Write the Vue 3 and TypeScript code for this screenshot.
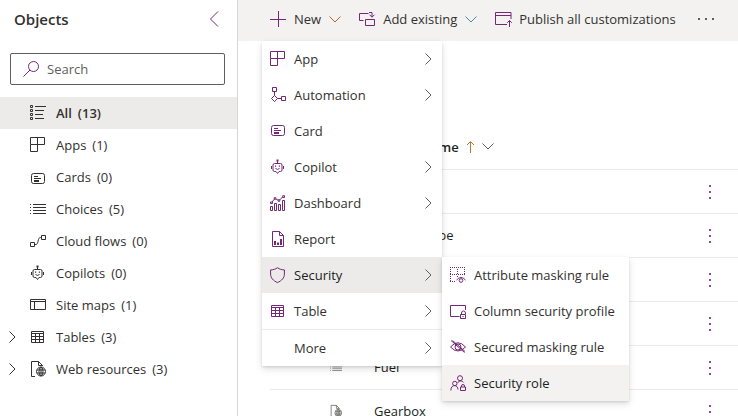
<script setup lang="ts">
import { ref } from 'vue'

interface Icon {
  line: string
  solid?: string
}
interface NavItem {
  label: string
  count: number
  icon: string
  expandable?: boolean
}
interface MenuItem {
  label: string
  icon?: string
  submenu?: boolean
}

const card = (y: number): Icon => ({
  line: `M3.5 ${y}.5h9a2 2 0 0 1 2 2v6a2 2 0 0 1-2 2h-9a2 2 0 0 1-2-2v-6a2 2 0 0 1 2-2zM4 ${y + 3}.5h4M4 ${y + 5}.5h7`,
  solid: `M4 ${y + 7}h5v2H4z`,
})

const icons: Record<string, Icon> = {
  all: {
    line: 'M.5.5h2v2h-2zM.5 4.5h2v2h-2zM.5 8.5h2v2h-2zM.5 12.5h2v2h-2zM5 1.5h11M5 5.5h9M5 9.5h8M5 13.5h9',
  },
  apps: { line: 'M.5.5h14v7H.5zM.5 7.5v7h7V.5' },
  card: card(2),
  cards: card(4),
  choices: {
    line: 'M3 3.5h13M3 6.5h13M3 9.5h13M3 12.5h13M0 3.5h1M0 6.5h1M0 9.5h1M0 12.5h1',
  },
  flows: {
    line: 'M.5 9.5h4v4h-4zM11.5 2.5h4v4h-4zM4.5 11.5H6c1 0 1.5-1 2-3l.5-2c.4-1.500 1-2 2-2h1',
  },
  copilot: {
    line: 'M4.500 4.500h6q1.500 0 1.500 1.500v5q0 1.500-1.500 1.500H9L7.500 14.500 6 12.500H4.500Q3 12.500 3 11V6q0-1.500 1.500-1.500zM7.500 4.500V2M1.500 7v3M13.500 7v3M5.500 9.500q2 1.800 4 0',
    solid: 'M6.500.5h2v2h-2zM5 6.500h1.200v1.200H5zM8.800 6.500H10v1.200H8.800z',
  },
  sitemap: { line: 'M.5 2.500h15v10H.5zM.5 4.500h15M4.500 4.500v8' },
  table: {
    line: 'M1.500 2.500h12v11h-12zM1.500 4.500h12M1.500 7.500h12M1.500 10.500h12M5.500 4.500v9M9.500 4.500v9',
  },
  web: {
    line: 'M5 15.500H1.500V.5h7l4 4V5M8.500.5v4h4M15.500 10.500a4.500 4.500 0 1 1-9 0a4.500 4.500 0 1 1 9 0zM13 10.500a2 4.500 0 1 1-4 0a2 4.500 0 1 1 4 0zM7 9h8M7 12h8M11 6v9',
  },
  plus: { line: 'M8.500 0v16M0 8.500h16' },
  existing: {
    line: 'M4.500 9.500h-4v-7h9M6.500 8.500h9v6h-9zM10 1.500h3v4.500M10.500 3.700L13 6.200l2.500-2.500',
  },
  publish: { line: 'M12 13.500H.5v-12h15.500V8M.5 4.500H16M14.500 16V9.500M12.200 11.800l2.300-2.300 2.300 2.300' },
  automation: {
    line: 'M2.500.5h4v4h-4zM4.500 4.500v4M4.500 8.500l3 3-3 3-3-3zM7.500 11.500h4M11.500 9.500h4v4h-4z',
  },
  dashboard: {
    line: 'M.5 11.500h2v4h-2zM4.500 8.500h2v7h-2zM8.500 9.500h2v6h-2zM12.500 5.500h2v10h-2zM2 7l2.200-2.700M6 4l2 1.200M10 4.800L12.500 2M.5 7h2v1.500h-2zM4.200 2.700h1.600v1.600H4.200zM8.200 4.700h1.600v1.600H8.200zM12.700.7h1.800v1.800h-1.800z',
  },
  report: {
    line: 'M2.500.5h7l4 4v11h-11zM9.500.5v4h4',
    solid: 'M4 10h2v4H4zM7 11.500h2V14H7zM10 8h2v6h-2z',
  },
  shield: {
    line: 'M7.500.7C5.500 2.200 3.500 2.800.6 2.900V7c0 4 2.600 6.600 6.900 8.600 4.300-2 6.900-4.600 6.900-8.600V2.900C11.500 2.800 9.500 2.200 7.500.7z',
  },
  attribute: {
    line: 'M0 .5h1m1 0h1m1 0h1m1 0h1m1 0h1m1 0h1m1 0h1m1 0h1M0 7.500h1m1 0h1m1 0h1m1 0h1m1 0h1m1 0h1m1 0h1m1 0h1M0 14.500h1m1 0h1m1 0h1M.5 2v1m0 1v1m0 1v1m0 2v1m0 1v1m0 1v1M7.500 2v1m0 1v1m0 1v1m0 2v1M14.500 2v1m0 1v1m0 1v1M6.500 13q4.500-5 9 0M12.800 13.500a1.800 1.800 0 1 1-3.600 0a1.800 1.800 0 1 1 3.600 0z',
  },
  column: {
    line: 'M9.500 13.500H.5v-11h15V7M11.500 11v-1a2 2 0 0 1 4 0v1M10.500 11.500h5v4h-5z',
    solid: 'M12.500 13h1v1h-1z',
  },
  masking: {
    line: 'M.5 8q7.500-8.500 15 0-7.500 8-15 0zM11 8a3 3 0 1 1-6 0a3 3 0 1 1 6 0zM1 1.500l13.500 12M2.500 1.500l12.500 11',
  },
  role: {
    line: 'M12.500 3.200a2.500 2.500 0 1 1-5 0a2.500 2.500 0 1 1 5 0zM7 8.500a2.200 2.200 0 1 1-4.400 0a2.200 2.200 0 1 1 4.400 0zM.8 15.500c0-6.400 7-6.400 7.200-1M7.500 8c1.300-2.400 4.700-2.600 6.200-.5M11.500 12v-1a1.500 1.500 0 0 1 3 0v1M10.500 12h5v3.500h-5z',
  },
  search: { line: 'M15.500 5.500a5 5 0 1 1-10 0a5 5 0 1 1 10 0zM7 9L.5 15.500' },
}

const navItems: NavItem[] = [
  { label: 'All', count: 13, icon: 'all' },
  { label: 'Apps', count: 1, icon: 'apps' },
  { label: 'Cards', count: 0, icon: 'cards' },
  { label: 'Choices', count: 5, icon: 'choices' },
  { label: 'Cloud flows', count: 0, icon: 'flows' },
  { label: 'Copilots', count: 0, icon: 'copilot' },
  { label: 'Site maps', count: 1, icon: 'sitemap' },
  { label: 'Tables', count: 3, icon: 'table', expandable: true },
  { label: 'Web resources', count: 3, icon: 'web', expandable: true },
]

const newMenu: MenuItem[] = [
  { label: 'App', icon: 'apps', submenu: true },
  { label: 'Automation', icon: 'automation', submenu: true },
  { label: 'Card', icon: 'card' },
  { label: 'Copilot', icon: 'copilot', submenu: true },
  { label: 'Dashboard', icon: 'dashboard', submenu: true },
  { label: 'Report', icon: 'report' },
  { label: 'Security', icon: 'shield', submenu: true },
  { label: 'Table', icon: 'table', submenu: true },
  { label: 'More', submenu: true },
]

const securityMenu: MenuItem[] = [
  { label: 'Attribute masking rule', icon: 'attribute' },
  { label: 'Column security profile', icon: 'column' },
  { label: 'Secured masking rule', icon: 'masking' },
  { label: 'Security role', icon: 'role' },
]

const rows = [
  { name: 'Brand', icon: 'choices' },
  { name: 'Cylinder type', icon: 'choices' },
  { name: 'Doors', icon: 'choices' },
  { name: 'Drive', icon: 'choices' },
  { name: 'Fuel', icon: 'choices' },
  { name: 'Gearbox', icon: 'web' },
]

const selected = ref('All')
const query = ref('')
const openItem = ref('Security')
const activeRole = ref('Security role')
</script>

<template>
  <div class="page">
    <aside class="sidebar">
      <header class="side-head">
        <h1>Objects</h1>
        <button type="button" class="collapse" aria-label="Collapse">
          <svg width="10" height="16" viewBox="0 0 10 16"><path d="M9 .5L1.500 8 9 15.500" /></svg>
        </button>
      </header>
      <label class="search">
        <svg class="icon" viewBox="0 0 16 16"><path :d="icons.search.line" /></svg>
        <input v-model="query" type="text" placeholder="Search" aria-label="Search" />
      </label>
      <nav>
        <ul>
          <li v-for="item in navItems" :key="item.label">
            <button
              type="button"
              class="nav-item"
              :class="{ selected: item.label === selected }"
              @click="selected = item.label"
            >
              <span class="expander">
                <svg v-if="item.expandable" width="7" height="12" viewBox="0 0 7 12"><path d="M.5.5L6 6 .5 11.500" /></svg>
              </span>
              <svg class="icon" viewBox="0 0 16 16">
                <path :d="icons[item.icon].line" />
                <path v-if="icons[item.icon].solid" class="solid" :d="icons[item.icon].solid" />
              </svg>
              <span>{{ item.label }}</span>
              <span class="count">({{ item.count }})</span>
            </button>
          </li>
        </ul>
      </nav>
    </aside>

    <main class="content">
      <div class="toolbar">
        <div class="new-wrap">
          <button type="button" class="command" aria-haspopup="menu" aria-expanded="true">
            <svg class="icon accent" viewBox="0 0 16 16"><path :d="icons.plus.line" /></svg>
            <span>New</span>
            <svg class="down warm" width="12" height="7" viewBox="0 0 12 7"><path d="M.5.5L6 6 11.500.5" /></svg>
          </button>
          <div class="menu main-menu" role="menu">
            <div v-for="item in newMenu" :key="item.label" class="entry" :class="{ divided: item.label === 'More' }">
              <button
                type="button"
                role="menuitem"
                class="menu-item"
                :class="{ open: item.label === openItem }"
              >
                <svg class="icon accent" viewBox="0 0 16 16">
                  <path v-if="item.icon" :d="icons[item.icon].line" />
                  <path v-if="item.icon && icons[item.icon].solid" class="solid" :d="icons[item.icon].solid" />
                </svg>
                <span class="menu-label">{{ item.label }}</span>
                <svg v-if="item.submenu" class="more" width="7" height="12" viewBox="0 0 7 12"><path d="M.5.5L6 6 .5 11.500" /></svg>
              </button>
              <div v-if="item.label === openItem" class="menu sub-menu" role="menu">
                <button
                  v-for="sub in securityMenu"
                  :key="sub.label"
                  type="button"
                  role="menuitem"
                  class="menu-item"
                  :class="{ active: sub.label === activeRole }"
                  @mouseenter="activeRole = sub.label"
                >
                  <svg v-if="sub.icon" class="icon accent" viewBox="0 0 16 16">
                    <path :d="icons[sub.icon].line" />
                    <path v-if="icons[sub.icon].solid" class="solid" :d="icons[sub.icon].solid" />
                  </svg>
                  <span class="menu-label">{{ sub.label }}</span>
                </button>
              </div>
            </div>
          </div>
        </div>
        <button type="button" class="command">
          <svg class="icon accent" viewBox="0 0 16 16"><path :d="icons.existing.line" /></svg>
          <span>Add existing</span>
          <svg class="down cool" width="12" height="7" viewBox="0 0 12 7"><path d="M.5.5L6 6 11.500.5" /></svg>
        </button>
        <button type="button" class="command">
          <svg class="icon accent" viewBox="0 0 16 16"><path :d="icons.publish.line" /></svg>
          <span>Publish all customizations</span>
        </button>
        <button type="button" class="command overflow" aria-label="More commands">
          <svg width="16" height="2" viewBox="0 0 16 2"><path class="solid" d="M0 0h2v2H0zM7 0h2v2H7zM14 0h2v2h-2z" /></svg>
        </button>
      </div>

      <div class="grid">
        <table>
          <colgroup>
            <col class="col-icon" />
            <col />
            <col class="col-actions" />
          </colgroup>
          <thead>
            <tr>
              <td></td>
              <th scope="col">
                <button type="button" class="sort">
                  <span>Display name</span>
                  <svg class="up" width="9" height="12" viewBox="0 0 9 12"><path d="M4.500 12V1M1 4l3.500-3.500L8 4" /></svg>
                  <svg class="down" width="12" height="7" viewBox="0 0 12 7"><path d="M.5.5L6 6 11.500.5" /></svg>
                </button>
              </th>
              <td></td>
            </tr>
          </thead>
          <tbody>
            <tr v-for="row in rows" :key="row.name">
              <td class="kind">
                <svg width="12" height="12" viewBox="0 0 16 16"><path :d="icons[row.icon].line" /></svg>
              </td>
              <td>{{ row.name }}</td>
              <td class="actions">
                <button type="button" aria-label="Row commands">
                  <svg width="2" height="14" viewBox="0 0 2 14"><path class="solid" d="M0 0h2v2H0zM0 6h2v2H0zM0 12h2v2H0z" /></svg>
                </button>
              </td>
            </tr>
          </tbody>
        </table>
      </div>
    </main>
  </div>
</template>

<style>
body {
  margin: 0;
  background: #fff;
}
</style>

<style scoped>
.page {
  display: grid;
  grid-template-columns: 237px minmax(0, 1fr);
  height: 100vh;
  overflow: hidden;
  font: 13px/20px 'Open Sans', 'Noto Sans', sans-serif;
  color: #323130;
}
button,
input {
  margin: 0;
  padding: 0;
  border: 0;
  background: none;
  font: inherit;
  color: inherit;
}
svg {
  display: block;
  flex: none;
  overflow: visible;
}
path {
  fill: none;
  stroke: currentColor;
  stroke-width: 1;
}
path.solid {
  fill: currentColor;
  stroke: none;
}
.icon {
  width: 16px;
  height: 16px;
}
.accent {
  color: #742774;
}
.side-head {
  display: flex;
  align-items: center;
  justify-content: space-between;
  height: 38px;
  padding: 0 18px 0 14px;
}
h1 {
  margin: 0;
  font-size: 15px;
  font-weight: 600;
}
.collapse {
  color: #742774;
}
.search {
  display: flex;
  align-items: center;
  gap: 8px;
  box-sizing: border-box;
  height: 32px;
  margin: 15px 12px 12px 10px;
  padding: 0 12px;
  border: 1px solid #605e5c;
  border-radius: 2px;
  color: #742774;
}
.search input {
  flex: 1;
  min-width: 0;
  outline: 0;
  color: #323130;
}
.search input::placeholder {
  color: #605e5c;
  opacity: 1;
}
ul {
  margin: 0;
  padding: 0;
  list-style: none;
}
.nav-item {
  display: flex;
  align-items: center;
  width: 100%;
  height: 32px;
  padding-left: 9px;
}
.nav-item .icon {
  margin-right: 10px;
}
.expander {
  width: 21px;
}
.count {
  margin-left: 6px;
}
.selected {
  background: #edebe9;
  font-weight: 600;
}
.content {
  border-left: 1px solid #d8d6d4;
}
.toolbar {
  display: flex;
  align-items: flex-start;
  gap: 18px;
  height: 41px;
  padding: 0 24px 0 32px;
  background: #f3f2f1;
}
.new-wrap {
  position: relative;
}
.command {
  display: flex;
  align-items: center;
  gap: 8px;
  height: 38px;
  white-space: nowrap;
}
.overflow {
  padding: 0 4px;
  color: #605e5c;
}
.down {
  color: #605e5c;
}
.down.warm {
  color: #a8692a;
}
.down.cool {
  color: #4f86a6;
}
.menu {
  position: absolute;
  z-index: 2;
  background: #fff;
  box-shadow: 0 3px 7px rgba(0, 0, 0, 0.13), 0 1px 2px rgba(0, 0, 0, 0.11);
}
.main-menu {
  top: 41px;
  left: -8px;
  width: 180px;
}
.sub-menu {
  top: 0;
  left: 100%;
  width: 187px;
}
.entry {
  position: relative;
}
.divided {
  border-top: 1px solid #edebe9;
}
.menu-item {
  display: flex;
  align-items: center;
  gap: 8px;
  width: 100%;
  height: 36px;
  padding: 0 10px 0 8px;
  text-align: left;
  white-space: nowrap;
}
.menu-label {
  flex: 1;
}
.more {
  color: #605e5c;
}
.open {
  background: #edebe9;
  color: #201f1e;
}
.active {
  background: #f3f2f1;
  color: #201f1e;
}
.grid {
  padding: 85px 0 0 32px;
}
table {
  width: 100%;
  border-collapse: separate;
  border-spacing: 0;
  table-layout: fixed;
}
.col-icon {
  width: 104px;
}
.col-actions {
  width: 56px;
}
td,
th {
  box-sizing: border-box;
  height: 44px;
  padding: 0 0 2px;
  border-bottom: 1px solid #edebe9;
  text-align: left;
  font-weight: 400;
  color: #201f1e;
}
.sort {
  display: flex;
  align-items: center;
  gap: 7px;
  font-weight: 600;
}
.up {
  color: #b8753a;
}
.kind {
  padding-left: 60px;
  color: #605e5c;
}
.actions {
  padding: 0;
  color: #8a4a9c;
}
.actions button {
  display: block;
  margin: 0 auto;
  padding: 0 8px;
}
</style>
